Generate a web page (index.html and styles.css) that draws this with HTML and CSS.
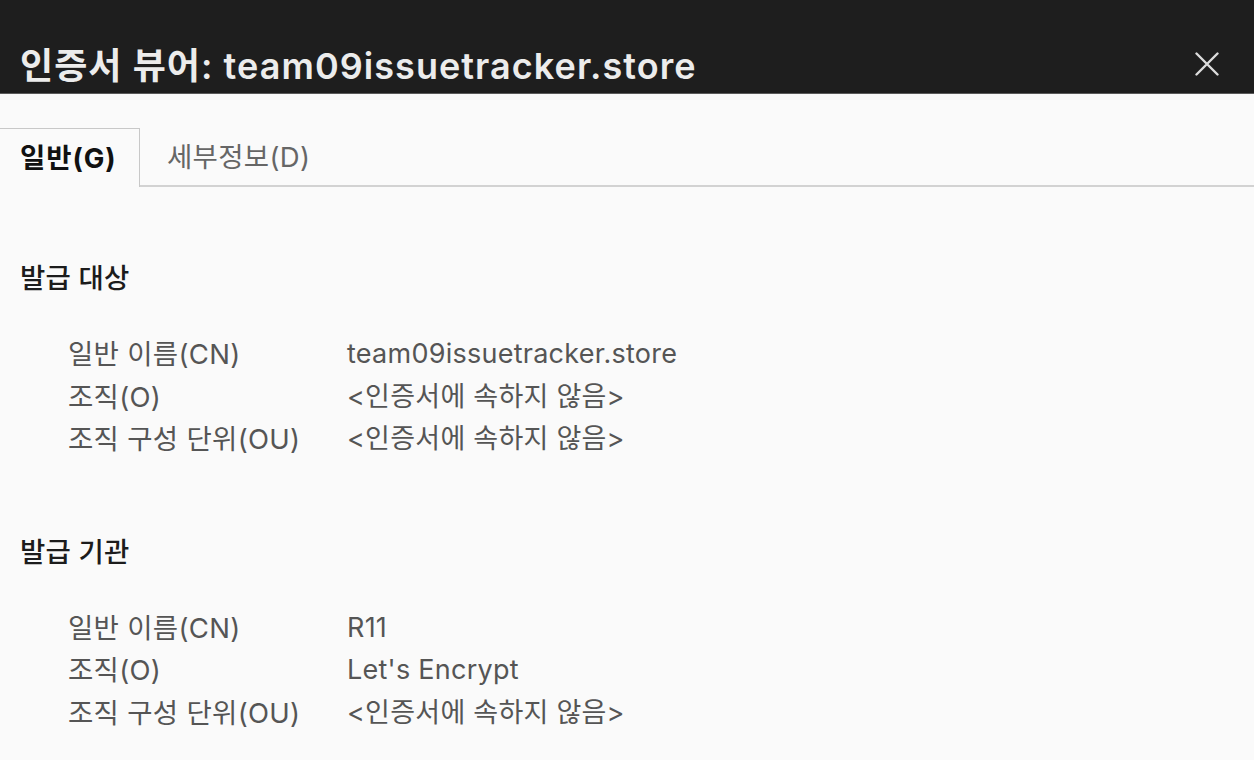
FILE: index.html
```html
<!DOCTYPE html>
<html lang="ko">
<head>
<meta charset="utf-8">
<title>인증서 뷰어</title>
<link rel="stylesheet" href="styles.css">
</head>
<body>
<header class="titlebar">
  <h1 class="title">인증서 뷰어: team09issuetracker.store</h1>
  <button class="close" aria-label="닫기">
    <svg width="24" height="24" viewBox="0 0 24 24"><path d="M1.5 1.5 L22.5 22.5 M22.5 1.5 L1.5 22.5" stroke="#dcdcdc" stroke-width="2.4" stroke-linecap="round" fill="none"/></svg>
  </button>
</header>
<nav class="tabs">
  <div class="tab active">일반(G)</div>
  <div class="tab">세부정보(D)</div>
  <div class="tab-fill"></div>
</nav>
<main class="content">
  <section class="section">
    <h2 class="heading">발급 대상</h2>
    <dl class="fields">
      <dt>일반 이름(CN)</dt><dd>team09issuetracker.store</dd>
      <dt>조직(O)</dt><dd>&lt;인증서에 속하지 않음&gt;</dd>
      <dt>조직 구성 단위(OU)</dt><dd>&lt;인증서에 속하지 않음&gt;</dd>
    </dl>
  </section>
  <section class="section">
    <h2 class="heading">발급 기관</h2>
    <dl class="fields">
      <dt>일반 이름(CN)</dt><dd>R11</dd>
      <dt>조직(O)</dt><dd>Let's Encrypt</dd>
      <dt>조직 구성 단위(OU)</dt><dd>&lt;인증서에 속하지 않음&gt;</dd>
    </dl>
  </section>
</main>
</body>
</html>
```

FILE: styles.css
```css
html, body {
  margin: 0;
  padding: 0;
}
body {
  background: #fafafa;
  font-family: Inter, "Noto Sans CJK KR", sans-serif;
  overflow: hidden;
}
.titlebar {
  height: 94px;
  box-sizing: border-box;
  padding: 40px 35px 0 20px;
  background: #1e1e1e;
  border-bottom: 1px solid #5a5a5a;
  display: flex;
  align-items: flex-start;
  justify-content: space-between;
}
.title {
  margin: 0;
  font-size: 36px;
  line-height: 52px;
  font-weight: 600;
  color: #ececec;
  letter-spacing: 1.05px;
}
.close {
  margin-top: 12px;
  padding: 0;
  border: 0;
  background: transparent;
  width: 24px;
  height: 24px;
  display: flex;
}
.tabs {
  margin-top: 34px;
  display: flex;
  height: 59px;
}
.tab {
  box-sizing: border-box;
  height: 59px;
  line-height: 58px;
  font-size: 27.5px;
  letter-spacing: 0.3px;
  color: #666;
  padding: 0 0 0 27px;
  border-bottom: 2px solid #d2d2d2;
  white-space: nowrap;
}
.tab.active {
  width: 140px;
  padding: 0 0 0 20px;
  font-weight: 700;
  letter-spacing: 0.9px;
  color: #111;
  border-top: 1px solid #c8c8c8;
  border-right: 1px solid #c8c8c8;
  border-bottom: 0;
}
.tab-fill {
  flex: 1;
  border-bottom: 2px solid #d2d2d2;
}
.content {
  padding: 70px 0 0 20px;
}
.section + .section {
  margin-top: 70px;
}
.heading {
  margin: 0 0 34px 0;
  font-size: 27.5px;
  letter-spacing: 0.2px;
  line-height: 42px;
  font-weight: 500;
  color: #1c1c1c;
}
.fields {
  margin: 0;
  padding-left: 48px;
  display: grid;
  grid-template-columns: 279px auto;
  font-size: 27.5px;
  letter-spacing: 0.3px;
  line-height: 42.5px;
  color: #555;
}
.fields dt, .fields dd {
  margin: 0;
  white-space: nowrap;
}
.fields dd {
  font-size: 27px;
  letter-spacing: 0.25px;
}
```
